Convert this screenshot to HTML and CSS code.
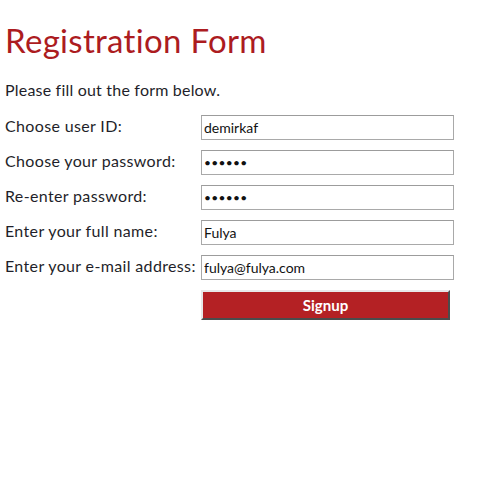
FILE: index.html
```html
<!DOCTYPE html>
<html>
<head>
<meta charset="utf-8">
<link rel="stylesheet" href="styles.css">
</head>
<body>
<h1 class="title">Registration Form</h1>
<p class="intro">Please fill out the form below.</p>
<form class="form">
  <label class="label" for="uid">Choose user ID:</label>
  <input class="field" id="uid" type="text" value="demirkaf">
  <label class="label" for="pw">Choose your password:</label>
  <input class="field field-pw" id="pw" type="password" value="123456">
  <label class="label" for="pw2">Re-enter password:</label>
  <input class="field field-pw" id="pw2" type="password" value="123456">
  <label class="label" for="name">Enter your full name:</label>
  <input class="field" id="name" type="text" value="Fulya">
  <label class="label" for="mail">Enter your e-mail address:</label>
  <input class="field" id="mail" type="text" value="fulya@fulya.com">
  <span></span>
  <button class="signup" type="button">Signup</button>
</form>
</body>
</html>
```
FILE: styles.css
```css
html, body {
  margin: 0;
  padding: 0;
  background: #fff;
}
body {
  padding: 0 5px;
  font-family: Lato, "Noto Sans", sans-serif;
  color: #1f1f2a;
}
.title {
  margin: 22px 0 0;
  font-size: 33px;
  line-height: 36px;
  font-weight: 400;
  letter-spacing: 0.3px;
  color: #ac1c1f;
}
.intro {
  margin: 22px 0 0;
  font-size: 16px;
  line-height: 20px;
  letter-spacing: 0.2px;
}
.form {
  display: grid;
  grid-template-columns: 196px 253px;
  row-gap: 10px;
  margin-top: 15px;
  align-items: center;
}
.label {
  font-size: 16px;
  line-height: 20px;
  letter-spacing: 0.35px;
  white-space: nowrap;
  padding-bottom: 4px;
}
.field {
  box-sizing: border-box;
  width: 253px;
  height: 25px;
  margin: 0;
  padding: 0 2px;
  border: 1px solid #a9a9a9;
  border-top-color: #9c9c9c;
  border-radius: 0;
  font-family: Lato, "Noto Sans", sans-serif;
  font-size: 14px;
  color: #111;
  background: #fff;
  outline: none;
}
.field-pw {
  font-size: 12px;
  letter-spacing: 0.3px;
}
.signup {
  box-sizing: border-box;
  width: 249px;
  height: 30px;
  margin: 0;
  border: 2px outset #9aa0a0;
  border-top-color: #e8e8e8;
  border-left-color: #e8e8e8;
  background: #b42124;
  color: #fff;
  font-family: Lato, "Noto Sans", sans-serif;
  font-size: 15px;
  font-weight: 700;
}
```
